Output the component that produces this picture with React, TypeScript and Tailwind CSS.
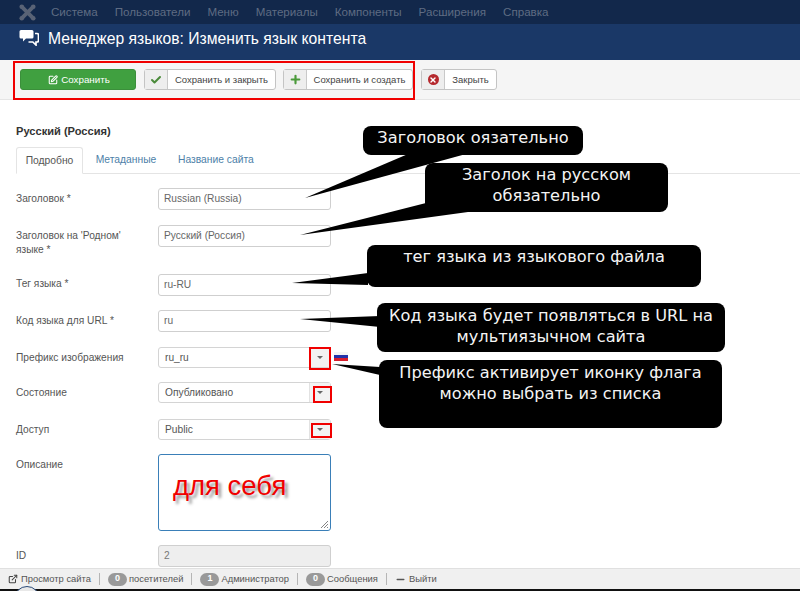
import React from 'react';
import { Check, ExternalLink, Minus, Plus, SquarePen, X } from 'lucide-react';

const navItems = ['Система', 'Пользователи', 'Меню', 'Материалы', 'Компоненты', 'Расширения', 'Справка'];

const JoomlaLogo = () => (
  <svg width="17" height="17" viewBox="0 0 16 16" className="text-[#596376]">
    <g fill="none" stroke="currentColor" strokeWidth="3.6" strokeLinecap="round">
      <path d="M3.4 3.4 12.6 12.6" />
      <path d="M12.6 3.4 3.4 12.6" />
    </g>
    <circle cx="2.6" cy="2.6" r="2.2" fill="currentColor" />
    <circle cx="13.4" cy="2.6" r="2.2" fill="currentColor" />
    <circle cx="2.6" cy="13.4" r="2.2" fill="currentColor" />
    <circle cx="13.4" cy="13.4" r="2.2" fill="currentColor" />
  </svg>
);

const CommentsIcon = () => (
  <svg width="20" height="17" viewBox="0 0 20 17">
    <path d="M2 1h11a1.500 1.500 0 0 1 1.500 1.500V8A1.500 1.500 0 0 1 13 9.500H7l-3 3v-3H2A1.500 1.500 0 0 1 .5 8V2.500A1.500 1.500 0 0 1 2 1z" fill="#fff" />
    <path d="M16 4.500h2A1.500 1.500 0 0 1 19.500 6v5.500A1.500 1.500 0 0 1 18 13h-1v3l-3.200-3H9.500" fill="none" stroke="#fff" strokeWidth="1.700" />
  </svg>
);

const ToolButton = ({ icon, label, width }: { icon: React.ReactNode; label: string; width: string }) => (
  <button className={`flex h-[21px] ${width} items-stretch rounded-[3px] border border-[#c4c4c4] bg-white text-[9.5px] text-[#444]`}>
    <span className="flex w-[23px] shrink-0 items-center justify-center border-r border-[#c9c9c9] bg-[#eeeeee]">{icon}</span>
    <span className="flex flex-1 items-center justify-center pt-[1px]">{label}</span>
  </button>
);

const Field = ({ label, className = '', children }: { label: React.ReactNode; className?: string; children: React.ReactNode }) => (
  <div className={`flex ${className}`}>
    <div className="w-[142px] shrink-0 pt-[4px] text-[10.2px] leading-[14px] text-[#555]">{label}</div>
    {children}
  </div>
);

const TextInput = ({ value, muted = false }: { value: string; muted?: boolean }) => (
  <div className={`flex h-[22px] w-[173px] items-center rounded-[3px] border border-[#cfcfcf] px-[5px] text-[10.2px] ${muted ? 'bg-[#eeeeee] text-[#777]' : 'bg-white text-[#666]'}`}>
    {value}
  </div>
);

const SelectBox = ({ value, outline }: { value: string; outline: string }) => (
  <div className="relative flex h-[21px] w-[173px] items-center rounded-[3px] border border-[#d4d4d4] bg-white pl-[6px] text-[10.2px] text-[#555]">
    <span className="flex-1 pt-[1px]">{value}</span>
    <span className="flex h-full w-[21px] items-center justify-center border-l border-[#e2e2e2] bg-[#f3f3f3]">
      <span className="h-0 w-0 border-x-[3px] border-t-[3px] border-x-transparent border-t-[#666]" />
    </span>
    <span className={`absolute border-2 border-[#f00000] ${outline}`} />
  </div>
);

const Callout = ({ className, children }: { className: string; children: React.ReactNode }) => (
  <div className={`absolute rounded-[8px] bg-black text-center font-['DejaVu_Sans',sans-serif] text-[16.200px] leading-[21px] text-[#f4f4f4] ${className}`}>
    {children}
  </div>
);

const Badge = ({ n }: { n: number }) => (
  <span className="flex h-[13px] w-[19px] items-center justify-center rounded-full bg-[#999] text-[9px] font-bold text-white">{n}</span>
);

const Sep = () => <span className="h-[12px] w-px bg-[#b5b5b5]" />;

export default function App() {
  return (
    <div className="relative flex h-[591px] w-[800px] flex-col overflow-hidden bg-white font-['Liberation_Sans',Arial,sans-serif]">
      <nav className="flex h-[24px] shrink-0 items-center bg-[#12284b] pl-[19px] text-[11.600px] text-[#5f6c83]">
        <JoomlaLogo />
        <div className="ml-[15px] flex gap-[17px]">
          {navItems.map(item => (
            <span key={item}>{item}</span>
          ))}
        </div>
      </nav>

      <header className="flex h-[36px] shrink-0 items-start bg-[#1a3867] pl-[19px] pt-[5px]">
        <CommentsIcon />
        <h1 className="ml-[9px] text-[15.700px] leading-[20px] text-white">Менеджер языков: Изменить язык контента</h1>
      </header>

      <div className="flex h-[40px] shrink-0 items-start border-b border-[#e5e5e5] bg-[#f5f5f5] pl-[20px] pt-[9px]">
        <button className="flex h-[21px] w-[116px] items-center justify-center gap-[3px] rounded-[3px] border border-[#3b8f3b] bg-[#40a040] pl-[2px] pt-[1px] text-[9.8px] text-white">
          <SquarePen size={10} strokeWidth={2.5} />
          Сохранить
        </button>
        <div className="ml-[8px]">
          <ToolButton width="w-[132px]" label="Сохранить и закрыть" icon={<Check size={12} strokeWidth={4} className="text-[#4a8a3a]" />} />
        </div>
        <div className="ml-[7px]">
          <ToolButton width="w-[130px]" label="Сохранить и создать" icon={<Plus size={13} strokeWidth={4} className="text-[#4a9a3a]" />} />
        </div>
        <div className="ml-[8px]">
          <ToolButton
            width="w-[76px]"
            label="Закрыть"
            icon={
              <span className="flex h-[11px] w-[11px] items-center justify-center rounded-full bg-[#b5282d]">
                <X size={8} strokeWidth={4} className="text-white" />
              </span>
            }
          />
        </div>
      </div>

      <main className="flex-1 overflow-hidden pl-[16px]">
        <h2 className="mt-[25px] text-[11.100px] font-bold leading-[12px] text-[#333]">Русский (Россия)</h2>

        <div className="mt-[10px] flex h-[27px] items-stretch border-b border-[#e4e4e4] text-[10.300px]">
          <span className="-mb-px flex w-[67px] items-center justify-center rounded-t-[3px] border border-b-white border-[#e4e4e4] bg-white text-[#555]">Подробно</span>
          <span className="flex w-[86px] items-center justify-center text-[#4d7fa8]">Метаданные</span>
          <span className="ml-[9px] flex items-center text-[#4d7fa8]">Название сайта</span>
        </div>

        <Field label="Заголовок *" className="mt-[14px]">
          <TextInput value="Russian (Russia)" />
        </Field>
        <Field label={<>Заголовок на 'Родном'<br />языке *</>} className="mt-[15px] h-[49px]">
          <TextInput value="Русский (Россия)" />
        </Field>
        <Field label={<span className="-mt-px block">Тег языка *</span>}>
          <TextInput value="ru-RU" />
        </Field>
        <Field label="Код языка для URL *" className="mt-[14px]">
          <TextInput value="ru" />
        </Field>
        <Field label="Префикс изображения" className="relative mt-[15px]">
          <SelectBox value="ru_ru" outline="-top-px right-[-1px] h-[23px] w-[22px]" />
          <span className="ml-[3px] mt-[5px] flex h-[9px] w-[14px] flex-col">
            <span className="h-[3px] bg-[#f4f4f4]" />
            <span className="h-[3px] bg-[#2233aa]" />
            <span className="h-[3px] bg-[#d81e2c]" />
          </span>
        </Field>
        <Field label="Состояние" className="mt-[14px]">
          <SelectBox value="Опубликовано" outline="top-[3px] right-[-2px] h-[17px] w-[19px]" />
        </Field>
        <Field label="Доступ" className="mt-[16px]">
          <SelectBox value="Public" outline="top-[3px] right-[-2px] h-[15px] w-[21px]" />
        </Field>
        <Field label="Описание" className="mt-[14px]">
          <div className="relative h-[77px] w-[173px] rounded-[3px] border border-[#3a7fb8] bg-white">
            <span className="absolute left-[14px] top-[15px] text-[27.500px] leading-[32px] text-[#f00000] [text-shadow:3px_3px_3px_#999]">для себя</span>
            <svg width="9" height="9" viewBox="0 0 9 9" className="absolute bottom-[1px] right-[1px]">
              <path d="M1 8 8 1M4 8l4-4M7 8l1-1" stroke="#666" strokeWidth="0.8" />
            </svg>
          </div>
        </Field>
        <Field label="ID" className="mt-[14px]">
          <TextInput value="2" muted />
        </Field>
      </main>

      <footer className="relative flex h-[21px] shrink-0 items-center gap-[8px] border-t border-[#e0e0e0] bg-[#f0f0f0] pl-[8px] text-[9.400px] text-[#555]">
        <ExternalLink size={10} strokeWidth={2.5} className="text-[#444]" />
        <span className="-ml-[5px]">Просмотр сайта</span>
        <Sep />
        <Badge n={0} />
        <span className="-ml-[6px]">посетителей</span>
        <Sep />
        <Badge n={1} />
        <span className="-ml-[6px]">Администратор</span>
        <Sep />
        <Badge n={0} />
        <span className="-ml-[6px]">Сообщения</span>
        <Sep />
        <Minus size={11} strokeWidth={3.5} className="text-[#555]" />
        <span className="-ml-[5px]">Выйти</span>
      </footer>
      <div className="h-[2px] shrink-0 bg-[#111]" />

      {/* bit of a circle cut off by the bottom edge */}
      <div className="absolute left-[14px] top-[586px] h-[26px] w-[26px] rounded-full border border-[#2a4a78] bg-[#e8e8e8]" />

      {/* red frame around the save buttons */}
      <div className="absolute left-[13px] top-[61px] h-[39px] w-[402px] border-2 border-[#f00000]" />

      {/* callout tails */}
      <svg width="800" height="591" viewBox="0 0 800 591" className="pointer-events-none absolute left-0 top-0">
        <path d="M408 154 305 198 466 154z" />
        <path d="M426 203 300 235 468 212z" />
        <path d="M368 273 292 283 368 285z" />
        <path d="M380 316 300 319 380 327z" />
        <path d="M380 367 332 364 380 375z" />
      </svg>

      <Callout className="left-[363px] top-[126px] h-[29px] w-[220px] pt-[1px]">Заголовок оязательно</Callout>
      <Callout className="left-[425px] top-[163px] h-[49px] w-[243px] pt-[1px]">Заголок на русском<br />обязательно</Callout>
      <Callout className="left-[367px] top-[245px] h-[42px] w-[334px] pt-[1px]">тег языка из языкового файла</Callout>
      <Callout className="left-[377px] top-[303px] h-[49px] w-[348px] pt-[2px]">Код языка будет появляться в URL на<br />мультиязычном сайта</Callout>
      <Callout className="left-[379px] top-[360px] h-[68px] w-[343px] pt-[2px]">Префикс активирует иконку флага<br />можно выбрать из списка</Callout>
    </div>
  );
}
